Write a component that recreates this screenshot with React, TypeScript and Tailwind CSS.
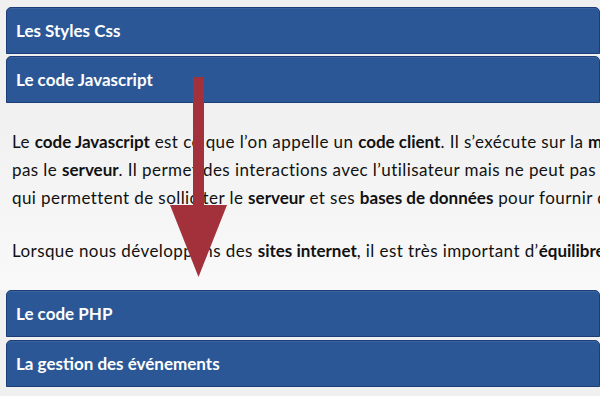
import React from "react";

function Header({ title }: { title: string }) {
  return (
    <div className="h-[47px] w-[594px] shrink-0 rounded-t-[5px] border border-[#1c3d78] bg-[#2b5797] flex items-center pl-[9px] shadow-[inset_0_1px_0_rgba(255,255,255,0.08)]">
      <span className="text-white font-bold text-[17px] leading-none">{title}</span>
    </div>
  );
}

function B({ children }: { children: React.ReactNode }) {
  return <b className="font-bold tracking-normal">{children}</b>;
}

export default function App() {
  return (
    <div
      className="relative w-[600px] h-[396px] overflow-hidden bg-[#f0f0f0] text-[#111]"
      style={{ fontFamily: "Lato, 'Open Sans', sans-serif" }}
    >
      <div className="flex flex-col pl-[6px] pt-[7px]">
        <Header title="Les Styles Css" />
        <div className="h-[2px]" />
        <Header title="Le code Javascript" />
        <div className="h-[187px] -ml-[6px] w-[600px] bg-gradient-to-b from-[#f0f0f0] to-[#f9f9f9] pl-[12px] pt-[25px] overflow-hidden whitespace-nowrap text-[17px] leading-[28px] tracking-[0.42px]">
          <div>
            Le <B>code Javascript</B> est ce que l’on appelle un <B>code client</B>. Il s’exécute sur la <B>ma</B>
          </div>
          <div>
            pas le <B>serveur</B>. Il permet des interactions avec l’utilisateur mais ne peut pas re
          </div>
          <div>
            qui permettent de solliciter le <B>serveur</B> et ses <B>bases de données</B> pour fournir des
          </div>
          <div className="mt-[25px]">
            Lorsque nous développons des <B>sites internet</B>, il est très important d’<B>équilibrer</B> le
          </div>
        </div>
        <Header title="Le code PHP" />
        <div className="h-[3px]" />
        <Header title="La gestion des événements" />
      </div>
      <svg
        className="absolute left-0 top-0 pointer-events-none"
        width="600"
        height="396"
        viewBox="0 0 600 396"
      >
        <rect x="193" y="77" width="11" height="130" fill="#a3313b" />
        <polygon points="170,205 227,205 198.5,277" fill="#a3313b" />
      </svg>
    </div>
  );
}
